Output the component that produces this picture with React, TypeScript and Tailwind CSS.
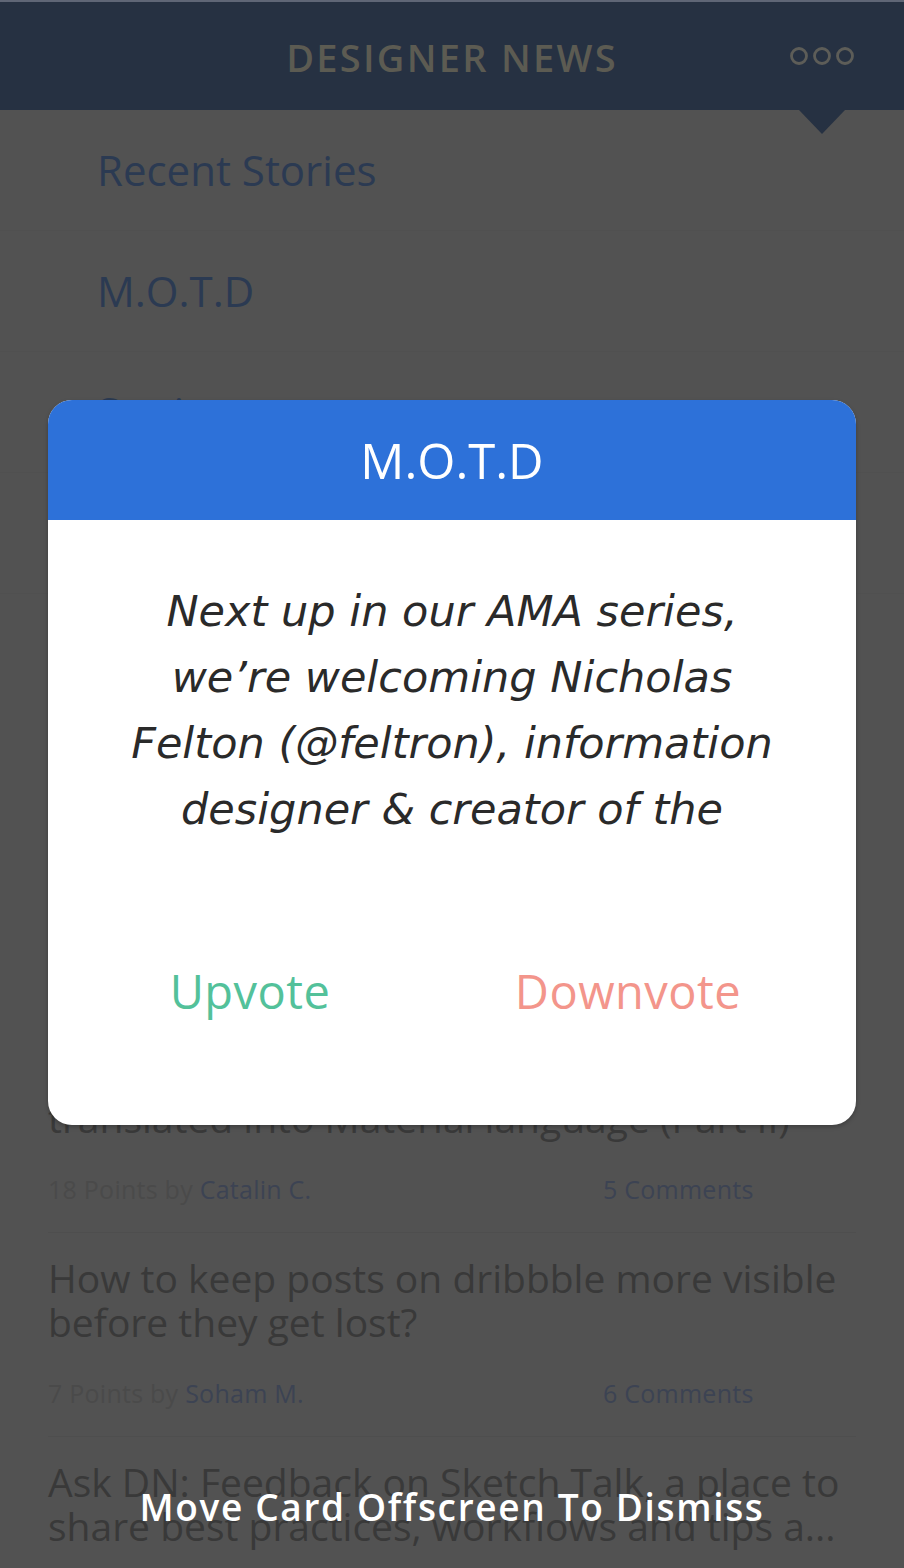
import React from "react";

const sans = { fontFamily: '"Open Sans", "Noto Sans", sans-serif' } as const;
const oblique = { fontFamily: '"DejaVu Sans", "Open Sans", sans-serif' } as const;

function Dots() {
  return (
    <svg width="66" height="22" viewBox="0 0 66 22" fill="none">
      <circle cx="10" cy="11" r="7.5" stroke="#5d5d58" strokeWidth="2.8" />
      <circle cx="33" cy="11" r="7.5" stroke="#5d5d58" strokeWidth="2.8" />
      <circle cx="56" cy="11" r="7.5" stroke="#5d5d58" strokeWidth="2.8" />
    </svg>
  );
}

type Story = { title: string[]; points: string; author: string; comments: string };

const stories: Story[] = [
  { title: ["Sketch 3.4 is out with a brand new", "export workflow"], points: "24 Points by", author: "Jonathan Z.", comments: "12 Comments" },
  { title: ["Site Design: Designer News redesign", "case study"], points: "31 Points by", author: "Sacha G.", comments: "9 Comments" },
  { title: ["Google's iOS design guidelines", "translated into Material language (Part II)"], points: "18 Points by", author: "Catalin C.", comments: "5 Comments" },
  { title: ["How to keep posts on dribbble more visible", "before they get lost?"], points: "7 Points by", author: "Soham M.", comments: "6 Comments" },
  { title: ["Ask DN: Feedback on Sketch Talk, a place to", "share best practices, workflows and tips a..."], points: "4 Points by", author: "Meng T.", comments: "3 Comments" },
];

export default function App() {
  return (
    <div className="relative w-[904px] h-[1568px] overflow-hidden bg-[#525252]" style={sans}>
      {/* header */}
      <div className="relative h-[110px] bg-[#263142] border-t-2 border-[#5f6676] flex items-center justify-center">
        <div className="text-[38px] font-semibold tracking-[0.06em] text-[#5c5b52] leading-none pt-[2px]">DESIGNER NEWS</div>
        <div className="absolute left-[789px] top-[43px]">
          <Dots />
        </div>
        <div className="absolute left-[799px] top-[108px] w-0 h-0 border-l-[23px] border-r-[23px] border-t-[24px] border-l-transparent border-r-transparent border-t-[#263142]" />
      </div>

      {/* menu */}
      <div className="flex flex-col">
        {["Recent Stories", "M.O.T.D", "Settings", "About"].map((m) => (
          <div key={m} className="h-[121px] flex items-center pl-[97px] border-b border-[#505050]">
            <span className="text-[42px] text-[#2b3a52] leading-none">{m}</span>
          </div>
        ))}
      </div>

      {/* stories */}
      <div className="flex flex-col pt-[27px] px-[48px]">
        {stories.map((s, i) => (
          <div key={i} className="pt-[23px] pb-[28px] border-b border-[#4e4e4e]">
            <div className="text-[39px] font-medium leading-[44px] text-[#393939] whitespace-nowrap">
              {s.title.map((t, j) => (
                <div key={j}>{t}</div>
              ))}
            </div>
            <div className="mt-[34px] flex text-[25px] tracking-[0.01em] leading-[30px]">
              <div className="w-[555px] text-[#4a4a4a]">
                {s.points} <span className="text-[#3c4353]">{s.author}</span>
              </div>
              <div className="text-[#3c4353]">{s.comments}</div>
            </div>
          </div>
        ))}
      </div>

      {/* card */}
      <div className="absolute left-[48px] top-[400px] w-[808px] h-[725px] bg-white rounded-[24px] overflow-hidden flex flex-col shadow-[0_2px_4px_rgba(0,0,0,0.25)]">
        <div className="h-[120px] bg-[#2d71d9] flex items-center justify-center">
          <span className="text-[49px] font-medium text-white leading-none">M.O.T.D</span>
        </div>
        <div className="pt-[58px] text-center italic text-[43px] leading-[66px] text-[#2a2a2a]" style={oblique}>
          <div>Next up in our AMA series,</div>
          <div>we’re welcoming Nicholas</div>
          <div>Felton (@feltron), information</div>
          <div>designer &amp; creator of the</div>
        </div>
        <div className="mt-[126px] grid grid-cols-2 text-[47px] tracking-[0.01em] leading-none">
          <div className="flex justify-center text-[#53c19a]">Upvote</div>
          <div className="flex justify-center pr-[52px] text-[#f3958b]">Downvote</div>
        </div>
      </div>

      {/* hint */}
      <div className="absolute left-0 right-0 top-[1486px] text-center text-white text-[37px] tracking-[0.045em] font-semibold leading-[42px]">
        Move Card Offscreen To Dismiss
      </div>
    </div>
  );
}
